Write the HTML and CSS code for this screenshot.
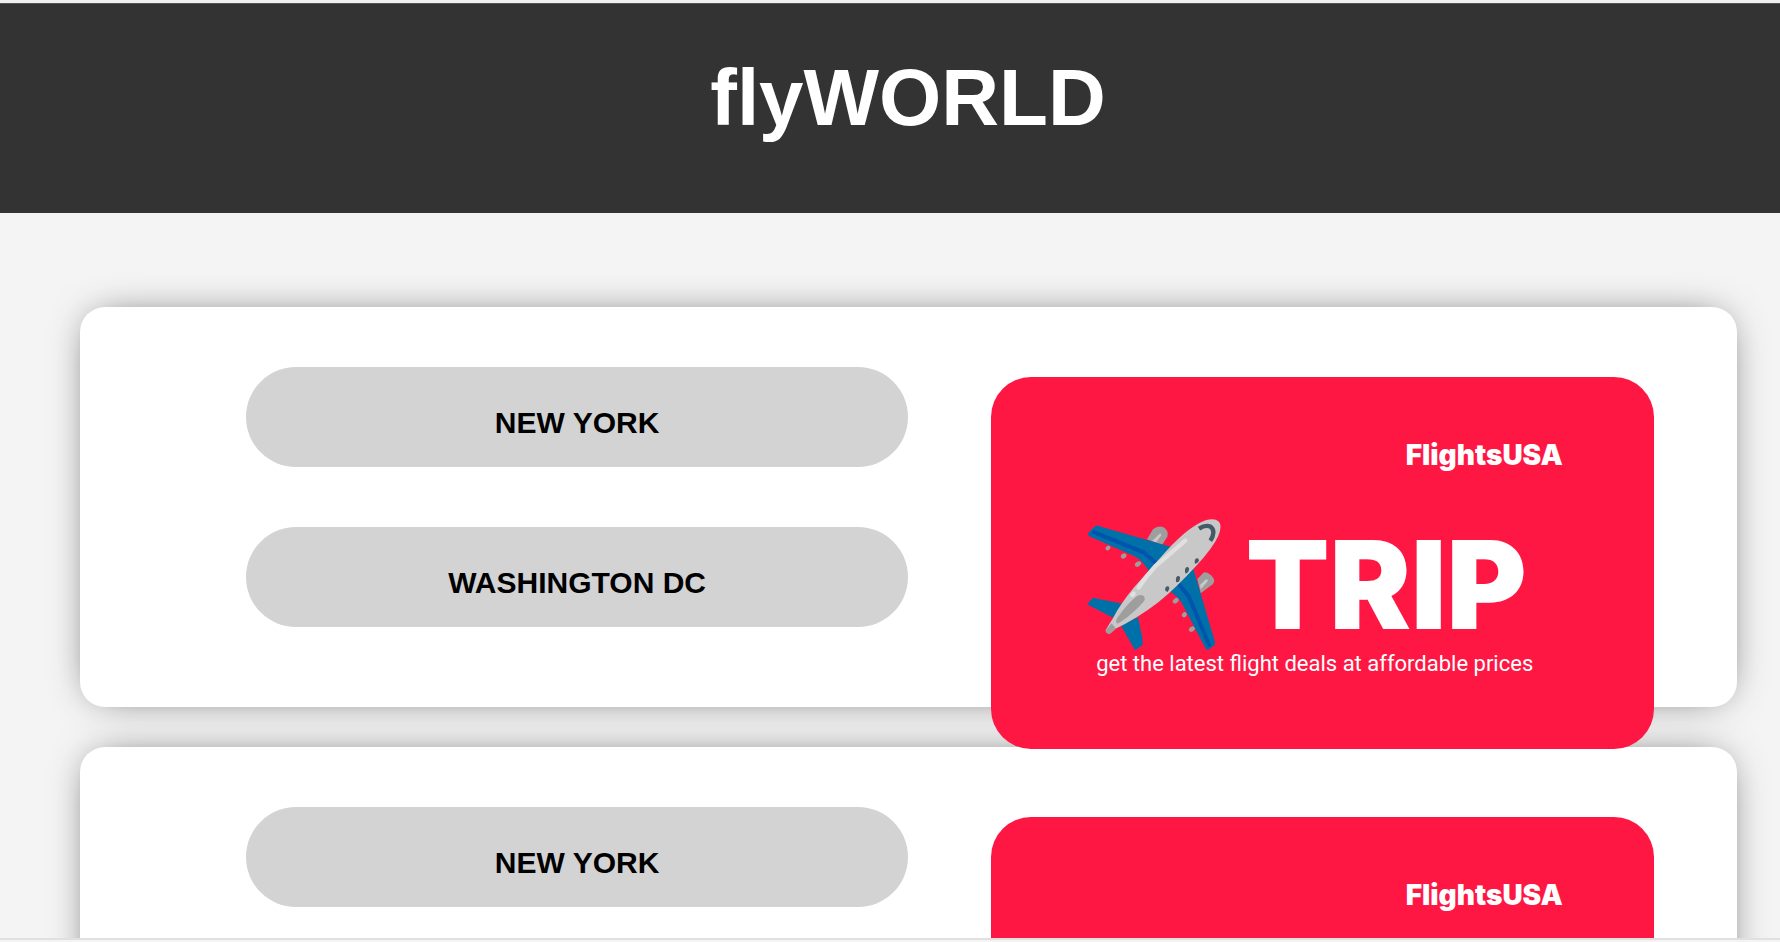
FILE: index.html
```html
<!DOCTYPE html>
<html lang="en">
<head>
<meta charset="utf-8">
<title>flyWORLD</title>
<link rel="stylesheet" href="styles.css">
</head>
<body>
<svg class="sprite" aria-hidden="true">
  <symbol id="plane" viewBox="45 54 408 408">
    <g fill="#9e9e9e">
      <path d="M228 121l18-30q16-14 34-5 14 11 9 27l-16 25z"/>
      <path d="M379 240l20-20q16 0 28 17 6 10-2 19l-36 27z"/>
      <ellipse cx="111" cy="147" rx="8" ry="6" transform="rotate(-35 111 147)"/>
      <ellipse cx="158" cy="171" rx="9" ry="7" transform="rotate(-35 158 171)"/>
      <ellipse cx="201" cy="195" rx="10" ry="7" transform="rotate(-35 201 195)"/>
      <ellipse cx="314" cy="305" rx="10" ry="7" transform="rotate(-40 314 305)"/>
      <ellipse cx="340" cy="347" rx="8" ry="7" transform="rotate(-40 340 347)"/>
      <ellipse cx="363" cy="390" rx="10" ry="7" transform="rotate(-35 363 390)"/>
    </g>
    <path d="M243 126l22-21q8-4 5 5l-14 20zM387 258l16-16q10-4 7 5l-21 24z" fill="#c8c8c8"/>
    <path d="M75 79l-24 24 2 8 136 60q18 9 28 22l17 24 70-72zM366 206l66 223-1 8-18 15-8-1-70-134q-10-20-24-29l-22-18zM66 296l88 18-28 42-78-40zM149 378l43 76 23-16-1-22-13-62z" fill="#0070a8"/>
    <path d="M64 98l154 62 36 32" fill="none" stroke="#0054ae" stroke-width="12"/>
    <path d="M319 250l34 42 63 150" fill="none" stroke="#0054ae" stroke-width="12"/>
    <path d="M104 394q7-13 20-33 24-47 68-99l96-108q66-72 116-90 27-8 40 4 10 13-2 42-15 34-64 88-62 68-116 112-65 50-130 80-12 8-18 14-10-1-10-10z" fill="#c8c8c8"/>
    <path d="M104 394l18-21 13 16-17 15q-5 2-11-3-3-3-3-7z" fill="#9e9e9e"/>
    <path d="M136 371q-4-8 10-24 26-35 51-55 12-7 21-1 7 9-1 18-28 32-65 58-13 10-16 4z" fill="#9e9e9e"/>
    <path d="M203 266q20-32 49-63l91-78M184 288l4-4" fill="none" stroke="#e0e0e0" stroke-width="13" stroke-linecap="round"/>
    <path d="M384 89q20-13 35-6 9 7 8 19-1 12-9 23" fill="none" stroke="#455a64" stroke-width="13"/>
    <path d="M283 275q-2-10 5-13 8-1 7 7l-5 10zM315 246q-2-11 5-15 8-1 7 8l-3 9-9 2zM342 218q-1-11 5-14 8-1 7 8l-3 8-7 4zM371 190q-1-9 5-12 8-1 8 7l-5 7-7 2z" fill="#455a64"/>
  </symbol>
</svg>

<div class="page">
  <header class="header">
    <h1 class="title">flyWORLD</h1>
  </header>
  <main class="list">
    <section class="card">
      <div class="cities">
        <h2 class="city">NEW YORK</h2>
        <h2 class="city">WASHINGTON DC</h2>
      </div>
      <div class="banner">
        <div class="offer">
          <p class="brand">FlightsUSA</p>
          <div class="trip"><svg class="plane" aria-hidden="true"><use href="#plane"/></svg><span class="word">TRIP</span></div>
          <p class="tagline">get the latest flight deals at affordable prices</p>
        </div>
      </div>
    </section>
    <section class="card">
      <div class="cities">
        <h2 class="city">NEW YORK</h2>
      </div>
      <div class="banner">
        <div class="offer">
          <p class="brand">FlightsUSA</p>
        </div>
      </div>
    </section>
  </main>
</div>
</body>
</html>
```
FILE: styles.css
```css
* {
  box-sizing: border-box;
}

body {
  margin: 0;
  font-family: "Liberation Sans", Arial, sans-serif;
  background: #f4f4f4;
}

.sprite {
  position: absolute;
  width: 0;
  height: 0;
}

.page {
  height: 100vh;
  overflow: hidden;
  border-top: 3px solid #f0f0f0;
  border-bottom: 2px solid #f4f4f4;
  display: flex;
  flex-direction: column;
}

.header {
  flex: none;
  padding: 48px 0 70px 36px;
  background: #333;
  border-top: 1px solid #555;
  color: #fff;
  text-align: center;
}

.title {
  margin: 0;
  font-size: 80px;
  line-height: 91px;
}

.list {
  flex: 1;
  min-height: 0;
  overflow: hidden;
  padding: 94px 43px 40px 80px;
  border-bottom: 2px solid #e0e0e0;
}

.card {
  display: flex;
  align-items: flex-start;
  height: 400px;
  margin-bottom: 40px;
  padding-top: 60px;
  background: #fff;
  border-radius: 25px;
  box-shadow: 0 0 40px -15px rgba(0, 0, 0, 0.8);
}

.cities {
  display: grid;
  gap: 60px;
  width: 40%;
  margin-left: 10%;
}

.city {
  margin: 0;
  padding: 39px 20px 27px;
  border-radius: 50px;
  background: #d3d3d3;
  color: #000;
  font-size: 30px;
  line-height: 34px;
  text-align: center;
}

.banner {
  position: relative;
  width: 40%;
  height: 372px;
  margin-top: 10px;
  margin-left: 5%;
  padding: 62px 20px 0;
  border-radius: 40px;
  background: #ff1744;
  color: #fff;
  display: flex;
  justify-content: center;
}

.offer {
  width: 480px;
}

.brand {
  margin: 0;
  font: 900 28px/32px Inter, sans-serif;
  text-align: right;
}

.trip {
  display: flex;
  align-items: center;
  gap: 24px;
  margin-top: 46px;
  padding-left: 3px;
}

.plane {
  flex: none;
  width: 136px;
  height: 136px;
}

.word {
  font: 900 122px/130px Inter, sans-serif;
}

.tagline {
  margin: -3px 0 0;
  padding-right: 16px;
  font: 400 22px/28px Roboto, sans-serif;
  text-align: center;
}
```
